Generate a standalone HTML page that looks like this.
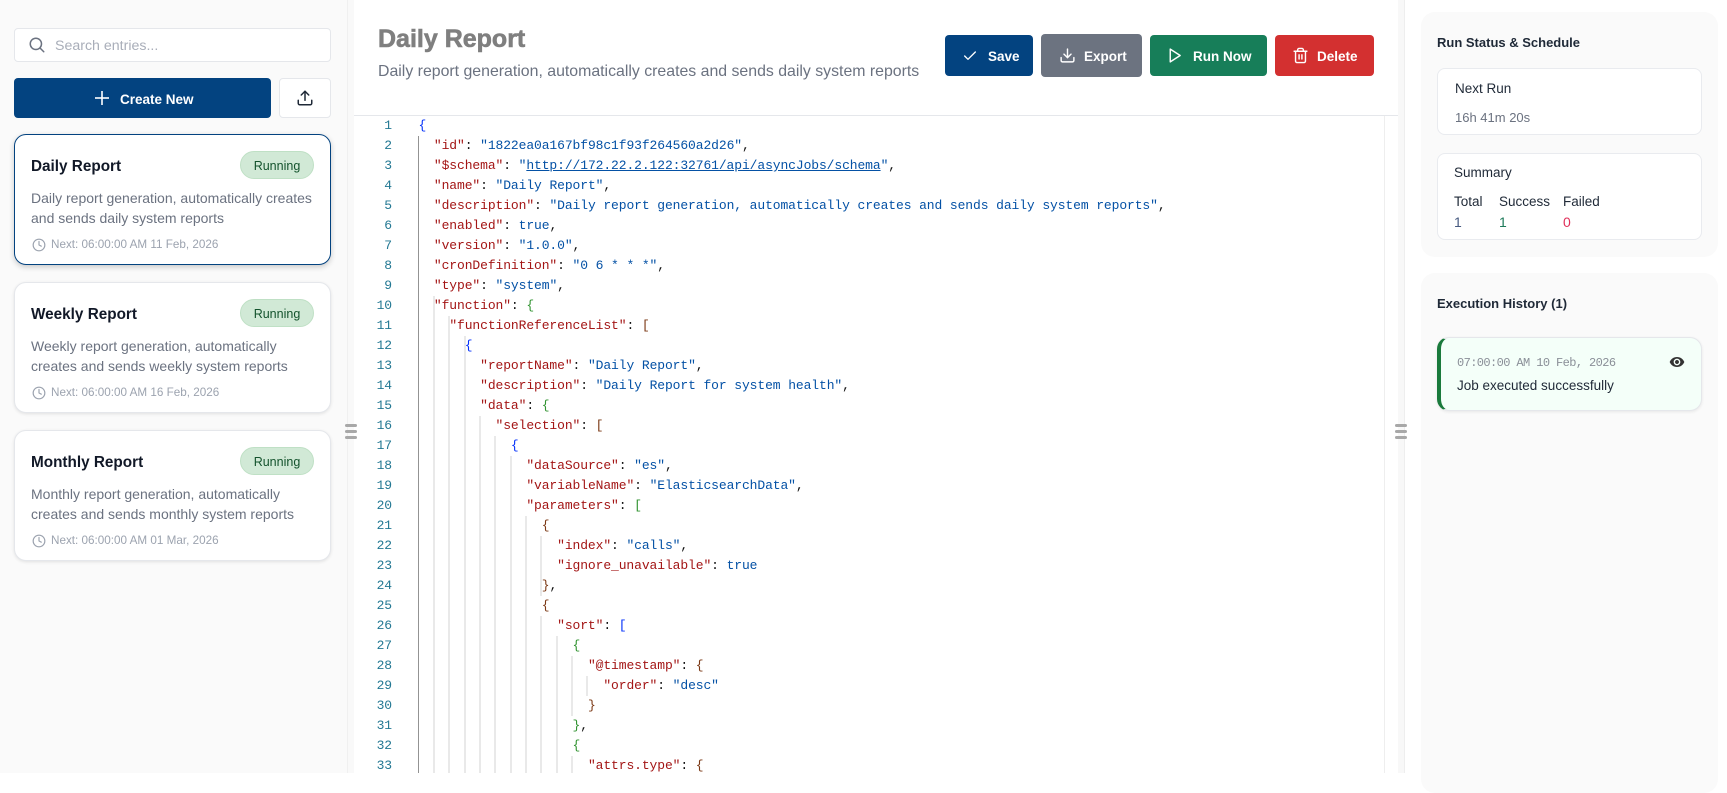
<!DOCTYPE html>
<html><head><meta charset="utf-8"><title>Daily Report</title>
<style>
*{box-sizing:border-box}
html,body{margin:0;padding:0;width:1727px;height:773px;overflow:hidden;background:#fff;font-family:"Liberation Sans",sans-serif}
.a,.t,svg.i{position:absolute}
.t{white-space:nowrap;line-height:20px}
.card{position:absolute;left:14px;width:317px;height:131px;background:#fff;border:1px solid #e5e7eb;border-radius:12px;box-shadow:0 1px 3px rgba(0,0,0,.1)}
.card.on{border:1.5px solid #034380;box-shadow:0 2px 6px rgba(0,0,0,.2)}
.badge{position:absolute;left:240px;width:74px;height:28px;background:#d1e9d6;border:1.5px solid #bfe0c5;border-radius:14px;color:#14532d;font-size:12.5px;line-height:29px;text-align:center}
.ct{font-size:15.3px;font-weight:bold;color:#111827;left:31px}
.cd{font-size:14px;color:#6b7280;left:31px}
.cn{font-size:11.7px;color:#9ca3af;left:51px}
.btn{position:absolute;border-radius:4px}
.bt{color:#fff;font-size:13.5px;font-weight:bold}
.box{position:absolute;left:1437px;width:265px;background:#fff;border:1px solid #e9ebef;border-radius:8px}
.sb{font-size:13.5px;color:#1f2937}
.ln{position:absolute;left:354px;width:38px;text-align:right;font:13px/20px "Liberation Mono",monospace;color:#237893;letter-spacing:-.1px;height:20px}
.c{position:absolute;left:418.5px;font:13px/20px "Liberation Mono",monospace;letter-spacing:-.1px;white-space:pre;color:#111;height:20px}
.k{color:#a31515}.s{color:#0451a5}.B{color:#0431fa}.G{color:#319331}.O{color:#7b3814}
.bar{position:absolute;width:12px;height:3px;border-radius:1.5px;background:#a8a8a8}
</style></head><body>
<div class="a" style="left:0;top:0;width:347px;height:773px;background:#fafafa"></div>
<div class="a" style="left:347px;top:0;width:7px;height:773px;background:#f9f9f9;border-left:1px solid #f0f0f0"></div>
<div class="a" style="left:1398px;top:0;width:7px;height:773px;background:#f8f8f8;border-right:1px solid #eeeeee"></div>

<div class="a" style="left:14px;top:28px;width:317px;height:34px;background:#fff;border:1px solid #e5e7eb;border-radius:4px"></div>
<svg class="i" style="left:28px;top:36px" width="18" height="18" viewBox="0 0 24 24" fill="none" stroke="#6b7280" stroke-width="2" stroke-linecap="round"><circle cx="10.5" cy="10.5" r="7.5"/><line x1="21" y1="21" x2="16" y2="16"/></svg>
<div class="t" style="left:55px;top:36px;font-size:14.2px;color:#a9aeb9">Search entries...</div>
<div class="btn" style="left:14px;top:78px;width:257px;height:40px;background:#034380"></div>
<svg class="i" style="left:93px;top:89px" width="18" height="18" viewBox="0 0 18 18" fill="none" stroke="#fff" stroke-width="1.6"><line x1="9" y1="2" x2="9" y2="16"/><line x1="2" y1="9" x2="16" y2="9"/></svg>
<div class="t bt" style="left:120px;top:90px">Create New</div>
<div class="btn" style="left:279px;top:78px;width:52px;height:40px;background:#fff;border:1px solid #e5e7eb"></div>
<svg class="i" style="left:296px;top:89px" width="18" height="18" viewBox="0 0 24 24" fill="none" stroke="#1f2937" stroke-width="2" stroke-linecap="round" stroke-linejoin="round"><path d="M21 15v4a2 2 0 0 1-2 2H5a2 2 0 0 1-2-2v-4"/><polyline points="17 8 12 3 7 8"/><line x1="12" y1="3" x2="12" y2="15"/></svg>

<div class="card on" style="top:134px"></div>
<div class="t ct" style="top:157px">Daily Report</div>
<div class="badge" style="top:151px">Running</div>
<div class="t cd" style="top:188px">Daily report generation, automatically creates</div>
<div class="t cd" style="top:208px">and sends daily system reports</div>
<svg class="i" style="left:32px;top:238px" width="14" height="14" viewBox="0 0 24 24" fill="none" stroke="#9ca3af" stroke-width="2" stroke-linecap="round" stroke-linejoin="round"><circle cx="12" cy="12" r="10"/><polyline points="12 6 12 12 16 14"/></svg>
<div class="t cn" style="top:235px">Next: 06:00:00 AM 11 Feb, 2026</div>

<div class="card" style="top:282px"></div>
<div class="t ct" style="top:305px">Weekly Report</div>
<div class="badge" style="top:299px">Running</div>
<div class="t cd" style="top:336px">Weekly report generation, automatically</div>
<div class="t cd" style="top:356px">creates and sends weekly system reports</div>
<svg class="i" style="left:32px;top:386px" width="14" height="14" viewBox="0 0 24 24" fill="none" stroke="#9ca3af" stroke-width="2" stroke-linecap="round" stroke-linejoin="round"><circle cx="12" cy="12" r="10"/><polyline points="12 6 12 12 16 14"/></svg>
<div class="t cn" style="top:383px">Next: 06:00:00 AM 16 Feb, 2026</div>

<div class="card" style="top:430px"></div>
<div class="t ct" style="top:453px">Monthly Report</div>
<div class="badge" style="top:447px">Running</div>
<div class="t cd" style="top:484px">Monthly report generation, automatically</div>
<div class="t cd" style="top:504px">creates and sends monthly system reports</div>
<svg class="i" style="left:32px;top:534px" width="14" height="14" viewBox="0 0 24 24" fill="none" stroke="#9ca3af" stroke-width="2" stroke-linecap="round" stroke-linejoin="round"><circle cx="12" cy="12" r="10"/><polyline points="12 6 12 12 16 14"/></svg>
<div class="t cn" style="top:531px">Next: 06:00:00 AM 01 Mar, 2026</div>

<div class="bar" style="left:345px;top:424px"></div><div class="bar" style="left:345px;top:430px"></div><div class="bar" style="left:345px;top:436px"></div>
<div class="bar" style="left:1395px;top:424px"></div><div class="bar" style="left:1395px;top:430px"></div><div class="bar" style="left:1395px;top:436px"></div>

<div class="t" style="left:378px;top:29px;font-size:25px;font-weight:bold;color:#7f7f7f;-webkit-text-stroke:.6px #7f7f7f">Daily Report</div>
<div class="t" style="left:378px;top:62px;font-size:15.87px;color:#6b7280">Daily report generation, automatically creates and sends daily system reports</div>

<div class="btn" style="left:945px;top:35px;width:88px;height:41px;background:#034380"></div>
<svg class="i" style="left:962px;top:48px" width="16" height="16" viewBox="0 0 24 24" fill="none" stroke="#fff" stroke-width="2" stroke-linecap="round" stroke-linejoin="round"><polyline points="20 6 9 17 4 12"/></svg>
<div class="t bt" style="left:988px;top:47px">Save</div>
<div class="btn" style="left:1041px;top:34px;width:101px;height:43px;background:#6c7380"></div>
<svg class="i" style="left:1058.5px;top:47px" width="17" height="17" viewBox="0 0 24 24" fill="none" stroke="#fff" stroke-width="2" stroke-linecap="round" stroke-linejoin="round"><path d="M21 15v4a2 2 0 0 1-2 2H5a2 2 0 0 1-2-2v-4"/><polyline points="7 10 12 15 17 10"/><line x1="12" y1="15" x2="12" y2="3"/></svg>
<div class="t bt" style="left:1084px;top:47px">Export</div>
<div class="btn" style="left:1150px;top:35px;width:117px;height:41px;background:#177e59"></div>
<svg class="i" style="left:1166px;top:47px" width="17" height="17" viewBox="0 0 24 24" fill="none" stroke="#fff" stroke-width="2" stroke-linejoin="round"><polygon points="6 3 20 12 6 21"/></svg>
<div class="t bt" style="left:1193px;top:47px">Run Now</div>
<div class="btn" style="left:1275px;top:35px;width:99px;height:41px;background:#d33030"></div>
<svg class="i" style="left:1291.5px;top:47px" width="17" height="17" viewBox="0 0 24 24" fill="none" stroke="#fff" stroke-width="2" stroke-linecap="round" stroke-linejoin="round"><path d="M3 6h18"/><path d="M19 6v14a2 2 0 0 1-2 2H7a2 2 0 0 1-2-2V6"/><path d="M8 6V4a2 2 0 0 1 2-2h4a2 2 0 0 1 2 2v2"/><line x1="10" y1="11" x2="10" y2="17"/><line x1="14" y1="11" x2="14" y2="17"/></svg>
<div class="t bt" style="left:1317px;top:47px">Delete</div>

<div class="a" style="left:354px;top:115px;width:1044px;height:1px;background:#e5e7eb"></div>
<div class="a" style="left:1384px;top:116px;width:1px;height:657px;background:#eeeeee"></div>

<svg class="i" style="left:0;top:0" width="1727" height="773" fill="none" stroke-width="1" shape-rendering="crispEdges">
<g stroke="#d3d3d3">
<path d="M434 296V773M449 316V773M465 336V773M480 416V773M495 436V773M511 456V773M526 516V773M541 536V596M541 616V773M557 636V773M572 656V716M572 756V773M587 676V696"/>
</g>
<path d="M418.5 136V773" stroke="#939393"/>
</svg>

<div class="ln" style="top:116px">1</div><div class="c" style="top:116px"><span class="B">{</span></div>
<div class="ln" style="top:136px">2</div><div class="c" style="top:136px">  <span class="k">"id"</span>: <span class="s">"1822ea0a167bf98c1f93f264560a2d26"</span>,</div>
<div class="ln" style="top:156px">3</div><div class="c" style="top:156px">  <span class="k">"$schema"</span>: <span class="s">"<u>http://172.22.2.122:32761/api/asyncJobs/schema</u>"</span>,</div>
<div class="ln" style="top:176px">4</div><div class="c" style="top:176px">  <span class="k">"name"</span>: <span class="s">"Daily Report"</span>,</div>
<div class="ln" style="top:196px">5</div><div class="c" style="top:196px">  <span class="k">"description"</span>: <span class="s">"Daily report generation, automatically creates and sends daily system reports"</span>,</div>
<div class="ln" style="top:216px">6</div><div class="c" style="top:216px">  <span class="k">"enabled"</span>: <span class="s">true</span>,</div>
<div class="ln" style="top:236px">7</div><div class="c" style="top:236px">  <span class="k">"version"</span>: <span class="s">"1.0.0"</span>,</div>
<div class="ln" style="top:256px">8</div><div class="c" style="top:256px">  <span class="k">"cronDefinition"</span>: <span class="s">"0 6 * * *"</span>,</div>
<div class="ln" style="top:276px">9</div><div class="c" style="top:276px">  <span class="k">"type"</span>: <span class="s">"system"</span>,</div>
<div class="ln" style="top:296px">10</div><div class="c" style="top:296px">  <span class="k">"function"</span>: <span class="G">{</span></div>
<div class="ln" style="top:316px">11</div><div class="c" style="top:316px">    <span class="k">"functionReferenceList"</span>: <span class="O">[</span></div>
<div class="ln" style="top:336px">12</div><div class="c" style="top:336px">      <span class="B">{</span></div>
<div class="ln" style="top:356px">13</div><div class="c" style="top:356px">        <span class="k">"reportName"</span>: <span class="s">"Daily Report"</span>,</div>
<div class="ln" style="top:376px">14</div><div class="c" style="top:376px">        <span class="k">"description"</span>: <span class="s">"Daily Report for system health"</span>,</div>
<div class="ln" style="top:396px">15</div><div class="c" style="top:396px">        <span class="k">"data"</span>: <span class="G">{</span></div>
<div class="ln" style="top:416px">16</div><div class="c" style="top:416px">          <span class="k">"selection"</span>: <span class="O">[</span></div>
<div class="ln" style="top:436px">17</div><div class="c" style="top:436px">            <span class="B">{</span></div>
<div class="ln" style="top:456px">18</div><div class="c" style="top:456px">              <span class="k">"dataSource"</span>: <span class="s">"es"</span>,</div>
<div class="ln" style="top:476px">19</div><div class="c" style="top:476px">              <span class="k">"variableName"</span>: <span class="s">"ElasticsearchData"</span>,</div>
<div class="ln" style="top:496px">20</div><div class="c" style="top:496px">              <span class="k">"parameters"</span>: <span class="G">[</span></div>
<div class="ln" style="top:516px">21</div><div class="c" style="top:516px">                <span class="O">{</span></div>
<div class="ln" style="top:536px">22</div><div class="c" style="top:536px">                  <span class="k">"index"</span>: <span class="s">"calls"</span>,</div>
<div class="ln" style="top:556px">23</div><div class="c" style="top:556px">                  <span class="k">"ignore_unavailable"</span>: <span class="s">true</span></div>
<div class="ln" style="top:576px">24</div><div class="c" style="top:576px">                <span class="O">}</span>,</div>
<div class="ln" style="top:596px">25</div><div class="c" style="top:596px">                <span class="O">{</span></div>
<div class="ln" style="top:616px">26</div><div class="c" style="top:616px">                  <span class="k">"sort"</span>: <span class="B">[</span></div>
<div class="ln" style="top:636px">27</div><div class="c" style="top:636px">                    <span class="G">{</span></div>
<div class="ln" style="top:656px">28</div><div class="c" style="top:656px">                      <span class="k">"@timestamp"</span>: <span class="O">{</span></div>
<div class="ln" style="top:676px">29</div><div class="c" style="top:676px">                        <span class="k">"order"</span>: <span class="s">"desc"</span></div>
<div class="ln" style="top:696px">30</div><div class="c" style="top:696px">                      <span class="O">}</span></div>
<div class="ln" style="top:716px">31</div><div class="c" style="top:716px">                    <span class="G">}</span>,</div>
<div class="ln" style="top:736px">32</div><div class="c" style="top:736px">                    <span class="G">{</span></div>
<div class="ln" style="top:756px">33</div><div class="c" style="top:756px">                      <span class="k">"attrs.type"</span>: <span class="O">{</span></div>

<div class="a" style="left:1421px;top:12px;width:297px;height:245px;background:#fafafa;border-radius:14px"></div>
<div class="t" style="left:1437px;top:33px;font-size:13px;font-weight:bold;color:#1f2937">Run Status &amp; Schedule</div>
<div class="box" style="top:68px;height:67px"></div>
<div class="t sb" style="left:1455px;top:79px">Next Run</div>
<div class="t" style="left:1455px;top:108px;font-size:13px;color:#6b7280">16h 41m 20s</div>
<div class="box" style="top:153px;height:87px"></div>
<div class="t sb" style="left:1454px;top:163px">Summary</div>
<div class="t sb" style="left:1454px;top:192px">Total</div>
<div class="t sb" style="left:1499px;top:192px">Success</div>
<div class="t sb" style="left:1563px;top:192px">Failed</div>
<div class="t" style="left:1454px;top:212px;font-size:14px;color:#475a80">1</div>
<div class="t" style="left:1499px;top:212px;font-size:14px;color:#1d7a5a">1</div>
<div class="t" style="left:1563px;top:212px;font-size:14px;color:#e0305a">0</div>

<div class="a" style="left:1421px;top:273px;width:297px;height:520px;background:#fafafa;border-radius:14px"></div>
<div class="t" style="left:1437px;top:294px;font-size:13px;font-weight:bold;color:#1f2937">Execution History (1)</div>
<div class="a" style="left:1437px;top:337px;width:265px;height:74px;background:#f4fff9;border:1px solid #e5e7eb;border-left:4px solid #1a7a3c;border-radius:12px;box-shadow:0 1px 3px rgba(0,0,0,.08)"></div>
<div class="t" style="left:1457px;top:353px;font:12px/20px 'Liberation Mono',monospace;color:#8a8f98;letter-spacing:-.6px">07:00:00 AM 10 Feb, 2026</div>
<div class="t" style="left:1457px;top:376px;font-size:13.5px;color:#1f2937">Job executed successfully</div>
<svg class="i" style="left:1669px;top:354px" width="16" height="16" viewBox="0 0 24 24" fill="#333"><path d="M12 4.5C7 4.5 2.73 7.61 1 12c1.73 4.39 6 7.5 11 7.5s9.27-3.11 11-7.5c-1.73-4.39-6-7.5-11-7.5zM12 17c-2.76 0-5-2.24-5-5s2.24-5 5-5 5 2.24 5 5-2.24 5-5 5zm0-8c-1.66 0-3 1.34-3 3s1.34 3 3 3 3-1.34 3-3-1.34-3-3-3z"/></svg>
</body></html>
